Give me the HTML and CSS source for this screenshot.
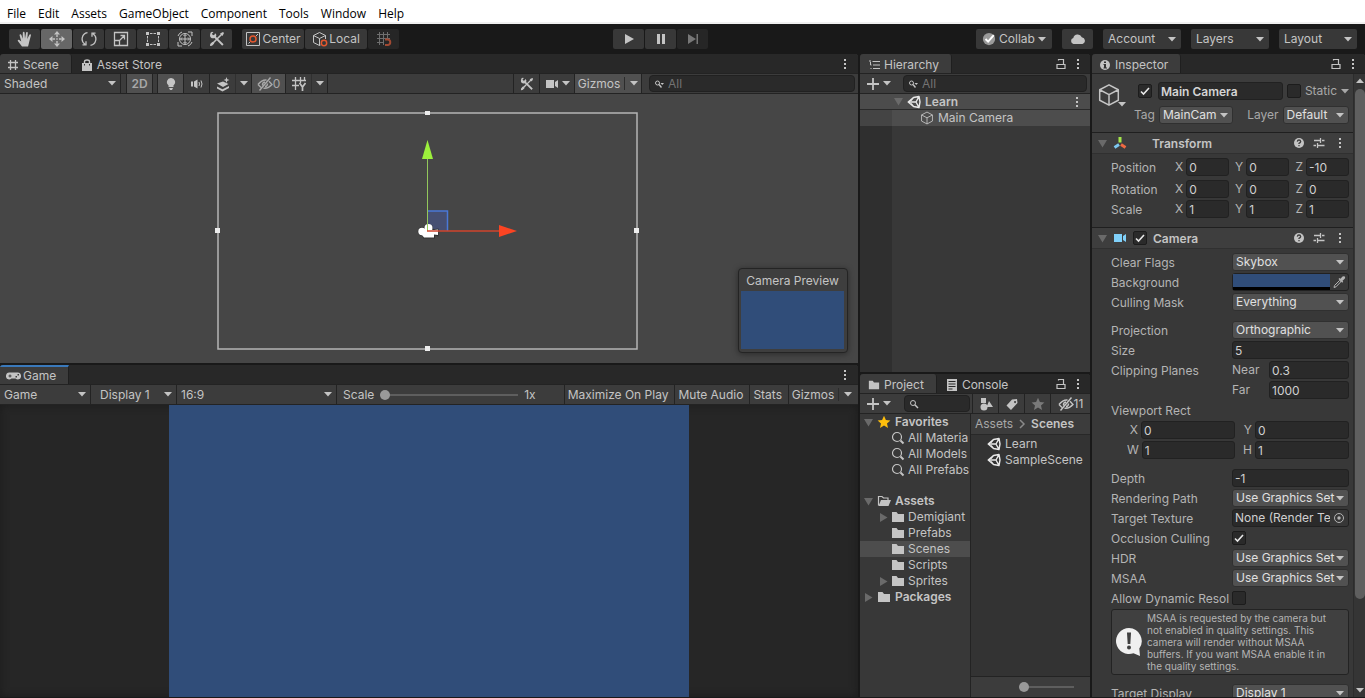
FILE: index.html
```html
<!DOCTYPE html>
<html lang="en">
<head>
    <meta charset="UTF-8">
    <meta name="viewport" content="width=device-width, initial-scale=1.0">
    <title>Learn - Scene Editor</title>
    <link rel="stylesheet" href="styles.css">
</head>
<body>
    <!-- Icon sprite -->
    <svg class="sprite" aria-hidden="true">
        <symbol id="i-hand" viewBox="0 0 16 16"><path d="M5 15.500 1 10.200C.2 9.200 1.400 8.200 2.300 9L4.300 10.600 2.600 4.400C2.400 3.200 4 2.900 4.400 4L5.700 7.800 5.800 1.700C5.900.5 7.500.5 7.600 1.700L8 7.400 9.100 1.600C9.300.5 11 .8 10.800 2L10.300 8 12.200 3.900C12.800 2.900 14.200 3.400 13.900 4.600L12.300 10.500C11.800 12.800 11.500 14.200 11 15.500Z" fill="currentColor"/></symbol>
        <symbol id="i-move" viewBox="0 0 16 16"><g fill="currentColor"><path d="M8 0 11 3.500H5ZM8 16 5 12.500H11ZM0 8 3.500 5V11ZM16 8 12.500 11V5Z"/><path d="M7.300 3.500h1.400v2.500H7.300zM7.300 10h1.400v2.500H7.300zM3.500 7.300H6v1.400H3.500zM10 7.300h2.500v1.400H10zM7.300 7.300h1.400v1.400H7.300z"/></g></symbol>
        <symbol id="i-rotate" viewBox="0 0 16 16"><g fill="none" stroke="currentColor" stroke-width="1.300"><path d="M6.500 1.700A6.300 6.300 0 0 0 4 13.200M9.500 14.300A6.300 6.300 0 0 0 12 2.800M1.500 13.800H5V10.200M14.500 2.200H11V5.800"/></g></symbol>
        <symbol id="i-scale" viewBox="0 0 16 16"><g fill="none" stroke="currentColor" stroke-width="1.300"><path d="M1.500 1.500h13v13h-13zM1.500 9.500h5v5M7 9 11.500 4.500M7.500 4.500h4v4"/></g></symbol>
        <symbol id="i-rect" viewBox="0 0 16 16"><path d="M5 2.500H11M5 13.500H11M2.500 5V11M13.500 5V11" stroke="currentColor" stroke-dasharray="2.500 1" fill="none"/><path d="M1 1h3v3H1zM12 1h3v3h-3zM1 12h3v3H1zM12 12h3v3h-3z" fill="currentColor"/></symbol>
        <symbol id="i-transform" viewBox="0 0 16 16"><g fill="none" stroke="currentColor"><circle cx="8" cy="8" r="5.500"/><path d="M8 3.500V12.500M3.500 8H12.500M6.500 5 8 3.500 9.500 5M6.500 11 8 12.500 9.500 11M5 6.500 3.500 8 5 9.500M11 6.500 12.500 8 11 9.500M1 11V15H5M11 1H15V5M1 5Q2 2 5 1M15 11Q14 14 11 15"/></g></symbol>
        <symbol id="i-tools" viewBox="0 0 16 16"><path d="M2.500 13.500 13 3" stroke="currentColor" stroke-width="1.600"/><path d="M11 2.500 14 1 15 2 13.500 5ZM4.500 1.200 2.900 2.800 4 4.300 5.500 3.800 6 2.200C7.600 3 7.600 4.700 6.900 5.700L14.600 13.200 13.200 14.800 5.500 7C3.500 8 .8 6.700 1 4.200L1.500 1.800 3 .8ZM1.200 13 3.500 10.700 5.300 12.500 3 14.800 1 15Z" fill="currentColor"/></symbol>
        <symbol id="i-center" viewBox="0 0 16 16"><path d="M1.500 1.500h13v13h-13z" fill="none" stroke="#c4c4c4"/><path d="M3.500 12.500 5.500 10.500M10.500 5.500 13 3" stroke="#c4c4c4"/><circle cx="8" cy="8" r="3" fill="none" stroke="#e4572e" stroke-width="1.500"/></symbol>
        <symbol id="i-local" viewBox="0 0 16 16"><path d="M8.500 14 7.500 14.500 1.500 11.500V4.500L7.500 1.500 13.500 4.500V8M1.500 4.500 7.500 7.500 13.500 4.500M7.500 7.500V14.500" fill="none" stroke="#c4c4c4"/><circle cx="12" cy="12" r="2.700" fill="none" stroke="#e4572e" stroke-width="1.500"/></symbol>
        <symbol id="i-snap" viewBox="0 0 16 16"><path d="M3.500 1V14M7.500 1V14M11.500 1V7M1 3.500H14M1 7.500H14M1 11.500H7" stroke="#6f6f6f" fill="none"/><path d="M9 8.500h3a2.800 2.800 0 0 1 0 5.500H9" fill="none" stroke="#a14a33" stroke-width="2"/></symbol>
        <symbol id="i-play" viewBox="0 0 16 16"><path d="M4 3 13 8 4 13Z" fill="currentColor"/></symbol>
        <symbol id="i-pause" viewBox="0 0 16 16"><path d="M4 3h3v10H4zM9 3h3v10H9z" fill="currentColor"/></symbol>
        <symbol id="i-step" viewBox="0 0 16 16"><path d="M3 3 11 8 3 13ZM11.500 3H13V13H11.500Z" fill="currentColor"/></symbol>
        <symbol id="i-down" viewBox="0 0 8 5"><path d="M0 0H8L4 4.500Z" fill="currentColor"/></symbol>
        <symbol id="i-fold" viewBox="0 0 9 9"><path d="M0 1H9L4.500 8.500Z" fill="currentColor"/></symbol>
        <symbol id="i-unfold" viewBox="0 0 9 9"><path d="M1 0V9L8.500 4.500Z" fill="currentColor"/></symbol>
        <symbol id="i-collab" viewBox="0 0 16 16"><circle cx="8" cy="8" r="7" fill="#9a9a9a"/><path d="M4 8 7 11 13.500 3.500" fill="none" stroke="#fff" stroke-width="2.300"/></symbol>
        <symbol id="i-cloud" viewBox="0 0 16 16"><path d="M3.500 13A3.100 3.100 0 0 1 3.300 7 4.500 4.500 0 0 1 11.800 6.200 3.500 3.500 0 0 1 12.500 13Z" fill="currentColor"/></symbol>
        <symbol id="i-hash" viewBox="0 0 12 12"><path d="M3.500 1V11M8.500 1V11M1 3.500H11M1 8.500H11" stroke="currentColor" stroke-width="1.300"/></symbol>
        <symbol id="i-bag" viewBox="0 0 12 12"><path d="M1 4h10v8H1z" fill="currentColor"/><path d="M3.500 5V2.500Q3.500 1 6 1T8.500 2.500V5" fill="none" stroke="currentColor" stroke-width="1.400"/><path d="M3.500 5v1.500M8.500 5v1.500" stroke="#333"/></symbol>
        <symbol id="i-dots" viewBox="0 0 4 12"><path d="M1 1h2v2H1zM1 5h2v2H1zM1 9h2v2H1z" fill="currentColor"/></symbol>
        <symbol id="i-lock" viewBox="0 0 10 12"><path d="M2.500 2.500V1.500h5V6M1 6.500h8v4H1z" fill="none" stroke="currentColor" stroke-width="1.200"/></symbol>
        <symbol id="i-bulb" viewBox="0 0 16 16"><path d="M8 2a4 4 0 0 0-2.500 7.200V11h5V9.200A4 4 0 0 0 8 2ZM6 12h4l-1 2H7Z" fill="currentColor"/></symbol>
        <symbol id="i-audio" viewBox="0 0 16 16"><path d="M2 5.500h2v5H2zM5 5.500 8.500 3.500V12.500L5 10.500Z" fill="currentColor"/><path d="M10 6Q11 8 10 10M12 4.500Q14 8 12 11.500" fill="none" stroke="currentColor"/></symbol>
        <symbol id="i-fx" viewBox="0 0 16 16"><path d="M2 7.500 8 5.500 13.500 8 8 11ZM2 10.500 7.500 13.200 14 10V12L7.500 15.500 2 12.500ZM11.500 1 12.300 3.200 14.500 4 12.300 4.800 11.500 7 10.700 4.800 8.500 4 10.700 3.200Z" fill="currentColor"/></symbol>
        <symbol id="i-eye" viewBox="0 0 16 16"><path d="M1 8.500Q5 3.500 9.500 4M12 5.200 15 8.500Q11 13 6.500 12.200M4 11.500 1 8.500M2.500 14.500 13.500 1.500M5.500 9.500Q5 6.500 8 6M10.500 7.500Q10.500 10.500 8 10.500" fill="none" stroke="currentColor" stroke-width="1.400"/></symbol>
        <symbol id="i-gridy" viewBox="0 0 16 16"><path d="M4.500 1V14M9.500 1V7M1 4.500H15M1 9.500H8M13.500 1V4" fill="none" stroke="currentColor" stroke-width="1.300"/><path d="M8.500 7 11.500 11 14.500 7M11.500 11V15" fill="none" stroke="currentColor" stroke-width="1.700"/></symbol>
        <symbol id="i-cam" viewBox="0 0 14 12"><path d="M1 2h8v8H1zM10 4 13 2V10L10 8Z" fill="currentColor"/></symbol>
        <symbol id="i-search" viewBox="0 0 12 10"><circle cx="4" cy="4" r="2.500" fill="none" stroke="currentColor"/><path d="M5.800 5.800 9 9" stroke="currentColor" stroke-width="1.500"/></symbol>
        <symbol id="i-searchmenu" viewBox="0 0 12 10"><circle cx="3.500" cy="4" r="2" fill="none" stroke="currentColor"/><path d="M5 5.500 7.500 8.500" stroke="currentColor" stroke-width="1.400"/><path d="M6.500 4h3.500L8.200 6Z" fill="currentColor"/></symbol>
        <symbol id="i-find" viewBox="0 0 14 14"><circle cx="6" cy="6" r="4.500" fill="none" stroke="currentColor" stroke-width="1.200"/><path d="M9.500 9.500 12.500 12.500" stroke="currentColor" stroke-width="2"/></symbol>
        <symbol id="i-list" viewBox="0 0 12 12"><path d="M1 2h2M4.500 2.500H12M5 6h7M5 9.500h7M2.500 3V6M2.500 6h1M2.500 9.500h1" stroke="currentColor" fill="none"/></symbol>
        <symbol id="i-plus" viewBox="0 0 12 12"><path d="M6 0V12M0 6H12" stroke="currentColor" stroke-width="1.800"/></symbol>
        <symbol id="i-unity" viewBox="0 0 14 14"><path d="M12 1.500 6.500 2.500 1.200 7 6.500 11.500 12 12.500 13 7ZM12 1.500 9 7 12 12.500M9 7H1.500M6.500 2.500 4 5.500M6.500 11.500 4 8.500" fill="none" stroke="currentColor" stroke-width="1.400" stroke-linejoin="round"/></symbol>
        <symbol id="i-cube" viewBox="0 0 16 16"><path d="M8 1.200 14.200 4.500V11.500L8 14.800 1.800 11.500V4.500ZM1.800 4.500 8 7.800 14.200 4.500M8 7.800V14.800" fill="none" stroke="currentColor" stroke-linejoin="round"/></symbol>
        <symbol id="i-info" viewBox="0 0 12 12"><circle cx="6" cy="6" r="5" fill="currentColor"/><path d="M5 2.500h2v1.500H5zM4.500 5H7v3.500H8v1H4.500v-1H5V6H4.500Z" fill="#333"/></symbol>
        <symbol id="i-axes" viewBox="0 0 14 14"><path d="M7 1V6.500" stroke="#a5e84b" stroke-width="3"/><path d="M6 8.500 1.500 11.500" stroke="#7cc8f0" stroke-width="3"/><path d="M8 8.500 12.500 11.500" stroke="#ef6a42" stroke-width="3"/></symbol>
        <symbol id="i-help" viewBox="0 0 12 12"><circle cx="6" cy="6" r="5" fill="currentColor"/><path d="M4.300 4.600Q4.500 3 6 3T7.700 4.600Q7.600 5.500 6 6.300V7M6 8V9.300" fill="none" stroke="#3e3e3e" stroke-width="1.300"/></symbol>
        <symbol id="i-preset" viewBox="0 0 12 12"><path d="M1 3.500H7M9 3.500h2.500M7.500 1V6M.500 8.500H3M5 8.500h6.500M4.500 6V11" fill="none" stroke="currentColor" stroke-width="1.300"/></symbol>
        <symbol id="i-pick" viewBox="0 0 14 14"><path d="M2 12.500 2.500 10.500 7.500 5.500 8.800 6.800 4 11.800Z" fill="none" stroke="currentColor"/><path d="M6.500 4 7.500 3 8.500 3.800 10.500 1.500Q12 .8 12.800 1.500T12.700 3.800L10.500 5.700 11.200 6.700 10.200 7.700Z" fill="currentColor"/></symbol>
        <symbol id="i-folder" viewBox="0 0 14 12"><path d="M1 1h4.500L7 3h6v8H1Z" fill="currentColor"/></symbol>
        <symbol id="i-folderopen" viewBox="0 0 14 12"><path d="M1.500 10.500V1.500H5L6.500 3H11V5" fill="none" stroke="currentColor" stroke-width="1.200"/><path d="M4 5H14L11.500 11H1.500Z" fill="currentColor"/></symbol>
        <symbol id="i-star" viewBox="0 0 14 14"><path d="M7 .8 8.900 5 13.400 5.400 10 8.500 11 13 7 10.600 3 13 4 8.500.600 5.400 5.100 5Z" fill="currentColor"/></symbol>
        <symbol id="i-console" viewBox="0 0 12 12"><path d="M1 0h10v12H1z" fill="currentColor"/><path d="M2.500 2.500h7M2.500 5h7M2.500 7.500h7M2.500 10h4" stroke="#282828"/></symbol>
        <symbol id="i-shapes" viewBox="0 0 14 14"><path d="M2 1h5v5H2zM10 4 14 10H7.500Z" fill="currentColor"/><circle cx="5" cy="10" r="3.500" fill="currentColor"/></symbol>
        <symbol id="i-tag" viewBox="0 0 14 14"><path fill-rule="evenodd" d="M7 2.500 12 2 12.500 6 6 13 1.500 8.500ZM10 4a1 1 0 1 0 .1 0Z" fill="currentColor"/></symbol>
        <symbol id="i-pad" viewBox="0 0 15 10"><path fill-rule="evenodd" d="M4 1.500H11A3.500 3.500 0 0 1 12 8.500Q10.500 8.500 9.500 7.500H5.500Q4.500 8.500 3 8.500A3.500 3.500 0 0 1 4 1.500ZM3.500 3.500V4.500H2.500v1h1v1h1v-1h1v-1h-1v-1ZM11.500 3v1.500H13V3ZM9.500 5v1.500H11V5Z" fill="currentColor"/></symbol>
        <symbol id="i-target" viewBox="0 0 12 12"><circle cx="6" cy="6" r="4.500" fill="none" stroke="currentColor"/><circle cx="6" cy="6" r="1.700" fill="currentColor"/></symbol>
        <symbol id="i-warn" viewBox="0 0 28 30"><path d="M14 1a13 13 0 1 0 4.500 25.200L25 29 24.300 21.500A13 13 0 0 0 14 1Z" fill="#f0f0f0"/><path d="M12 5.500h4L15.300 17h-2.600Z" fill="#404040"/><circle cx="14" cy="20.500" r="2" fill="#404040"/></symbol>
        <symbol id="i-chev" viewBox="0 0 8 12"><path d="M2 2 6 6 2 10" fill="none" stroke="#8a8a8a" stroke-width="1.500"/></symbol>
    </svg>

    <div class="editor">
        <nav class="menubar">
            <a href="#">File</a>
            <a href="#">Edit</a>
            <a href="#">Assets</a>
            <a href="#">GameObject</a>
            <a href="#">Component</a>
            <a href="#">Tools</a>
            <a href="#">Window</a>
            <a href="#">Help</a>
        </nav>

        <header class="toolbar">
            <div class="button-group">
                <button class="tool" aria-label="Hand"><svg class="icon"><use href="#i-hand"/></svg></button>
                <button class="tool active" aria-label="Move"><svg class="icon"><use href="#i-move"/></svg></button>
                <button class="tool" aria-label="Rotate"><svg class="icon"><use href="#i-rotate"/></svg></button>
                <button class="tool" aria-label="Scale"><svg class="icon"><use href="#i-scale"/></svg></button>
                <button class="tool" aria-label="Rect"><svg class="icon"><use href="#i-rect"/></svg></button>
                <button class="tool" aria-label="Transform"><svg class="icon"><use href="#i-transform"/></svg></button>
                <button class="tool" aria-label="Custom tools"><svg class="icon"><use href="#i-tools"/></svg></button>
            </div>
            <div class="button-group">
                <button class="tool wide"><svg class="icon"><use href="#i-center"/></svg>Center</button>
                <button class="tool wide"><svg class="icon"><use href="#i-local"/></svg>Local</button>
                <button class="tool dim" aria-label="Grid snapping"><svg class="icon"><use href="#i-snap"/></svg></button>
            </div>
            <div class="button-group play-group">
                <button class="tool" aria-label="Play"><svg class="icon"><use href="#i-play"/></svg></button>
                <button class="tool" aria-label="Pause"><svg class="icon"><use href="#i-pause"/></svg></button>
                <button class="tool dim" aria-label="Step"><svg class="icon"><use href="#i-step"/></svg></button>
            </div>
            <div class="toolbar-right">
                <button class="tool collab"><svg class="icon-row"><use href="#i-collab"/></svg>Collab<svg class="arrow"><use href="#i-down"/></svg></button>
                <button class="tool" aria-label="Cloud"><svg class="icon"><use href="#i-cloud"/></svg></button>
                <button class="tool menu">Account<svg class="arrow"><use href="#i-down"/></svg></button>
                <button class="tool menu">Layers<svg class="arrow"><use href="#i-down"/></svg></button>
                <button class="tool menu">Layout<svg class="arrow"><use href="#i-down"/></svg></button>
            </div>
        </header>

        <main class="workspace">
            <div class="column column-left">
                <!-- Scene -->
                <section class="panel scene">
                    <div class="tabs">
                        <button class="tab active"><svg class="icon-small"><use href="#i-hash"/></svg>Scene</button>
                        <button class="tab"><svg class="icon-small"><use href="#i-bag"/></svg>Asset Store</button>
                        <button class="dots" aria-label="Scene options"><svg><use href="#i-dots"/></svg></button>
                    </div>
                    <div class="strip">
                        <select class="strip-select shading" aria-label="Shading mode"><option>Shaded</option></select>
                        <button class="cell on two-d">2D</button>
                        <button class="cell on first" aria-label="Lighting"><svg class="icon"><use href="#i-bulb"/></svg></button>
                        <button class="cell" aria-label="Audio"><svg class="icon"><use href="#i-audio"/></svg></button>
                        <button class="cell" aria-label="Effects"><svg class="icon"><use href="#i-fx"/></svg></button>
                        <button class="cell slim" aria-label="Effects options"><svg class="arrow"><use href="#i-down"/></svg></button>
                        <button class="cell on eye"><svg class="icon"><use href="#i-eye"/></svg>0</button>
                        <button class="cell" aria-label="Grid"><svg class="icon"><use href="#i-gridy"/></svg></button>
                        <button class="cell slim last" aria-label="Grid options"><svg class="arrow"><use href="#i-down"/></svg></button>
                        <button class="cell push" aria-label="Component tools"><svg class="icon-row"><use href="#i-tools"/></svg></button>
                        <button class="cell cam" aria-label="Scene camera"><svg class="icon-row"><use href="#i-cam"/></svg><svg class="arrow"><use href="#i-down"/></svg></button>
                        <button class="cell on gizmos">Gizmos<svg class="arrow"><use href="#i-down"/></svg></button>
                        <label class="search scene-search"><svg><use href="#i-searchmenu"/></svg><input type="text" placeholder="All" aria-label="Search scene"></label>
                    </div>
                    <div class="scene-view">
                        <svg class="scene-canvas" viewBox="0 0 858 269">
                            <rect x="218" y="19" width="419" height="236" fill="none" stroke="#b5b5b5" stroke-width="1.500"/>
                            <g fill="#ececec">
                                <rect x="425" y="17" width="5" height="4"/>
                                <rect x="425" y="252" width="5" height="5"/>
                                <rect x="215" y="134" width="5" height="5"/>
                                <rect x="634" y="134" width="5" height="5"/>
                            </g>
                            <path d="M427 117h21v20h-21z" fill="#464f72"/>
                            <path d="M427 117h20.500v20" fill="none" stroke="#4a78d8" stroke-width="1.500"/>
                            <g fill="#303030">
                                <circle cx="422" cy="137.500" r="4.300"/>
                                <circle cx="428.500" cy="134.500" r="4.600"/>
                                <path d="M422 135H435L438.500 134.500V142.500L435 141.500V144.500H423Z"/>
                            </g>
                            <g fill="#fff">
                                <circle cx="422" cy="137.500" r="3.700"/>
                                <circle cx="428.500" cy="134" r="4"/>
                                <path d="M422 136H434L438 135.500V141L434 140.500V143.500H424L422 141Z"/>
                            </g>
                            <path d="M427.500 137V65" stroke="#93c75c"/>
                            <path d="M427.500 46 433 65H422Z" fill="#9cf03c"/>
                            <path d="M427 137H500" stroke="#d0442c" stroke-width="1.500"/>
                            <path d="M499 131 517 137 499 143Z" fill="#fb4422"/>
                        </svg>
                        <div class="preview">
                            <span>Camera Preview</span>
                            <div class="preview-image"></div>
                        </div>
                    </div>
                </section>

                <!-- Game -->
                <section class="panel game">
                    <div class="tabs">
                        <button class="tab active focused"><svg class="icon-pad"><use href="#i-pad"/></svg>Game</button>
                        <button class="dots" aria-label="Game options"><svg><use href="#i-dots"/></svg></button>
                    </div>
                    <div class="strip">
                        <select class="strip-select game-mode" aria-label="View"><option>Game</option></select>
                        <select class="strip-select display" aria-label="Display"><option>Display 1</option></select>
                        <select class="strip-select aspect" aria-label="Aspect"><option>16:9</option></select>
                        <label class="scale">Scale <input type="range" min="1" max="5" value="1"> 1x</label>
                        <button class="cell">Maximize On Play</button>
                        <button class="cell">Mute Audio</button>
                        <button class="cell">Stats</button>
                        <button class="cell gizmos">Gizmos<svg class="arrow"><use href="#i-down"/></svg></button>
                    </div>
                    <div class="game-view"><div class="game-image"></div></div>
                </section>
            </div>

            <div class="column column-mid">
                <!-- Hierarchy -->
                <section class="panel hierarchy">
                    <div class="tabs">
                        <button class="tab active"><svg class="icon-small"><use href="#i-list"/></svg>Hierarchy</button>
                        <button class="lock" aria-label="Lock hierarchy"><svg><use href="#i-lock"/></svg></button>
                        <button class="dots" aria-label="Hierarchy options"><svg><use href="#i-dots"/></svg></button>
                    </div>
                    <div class="strip">
                        <button class="add" aria-label="Create object"><svg class="icon-small"><use href="#i-plus"/></svg><svg class="arrow"><use href="#i-down"/></svg></button>
                        <label class="search"><svg><use href="#i-searchmenu"/></svg><input type="text" placeholder="All" aria-label="Search hierarchy"></label>
                    </div>
                    <ul class="hierarchy-list">
                        <li class="scene-row"><svg class="fold"><use href="#i-fold"/></svg><svg class="icon-row bright"><use href="#i-unity"/></svg><b>Learn</b><button class="dots" aria-label="Learn options"><svg><use href="#i-dots"/></svg></button></li>
                        <li class="object-row"><svg class="icon-row"><use href="#i-cube"/></svg>Main Camera</li>
                    </ul>
                </section>

                <!-- Project -->
                <section class="panel project">
                    <div class="tabs">
                        <button class="tab active"><svg class="icon-small"><use href="#i-folder"/></svg>Project</button>
                        <button class="tab"><svg class="icon-small"><use href="#i-console"/></svg>Console</button>
                        <button class="lock" aria-label="Lock project"><svg><use href="#i-lock"/></svg></button>
                        <button class="dots" aria-label="Project options"><svg><use href="#i-dots"/></svg></button>
                    </div>
                    <div class="strip">
                        <button class="add" aria-label="Create asset"><svg class="icon-small"><use href="#i-plus"/></svg><svg class="arrow"><use href="#i-down"/></svg></button>
                        <label class="search"><svg><use href="#i-search"/></svg><input type="text" aria-label="Search project"></label>
                        <button class="cell" aria-label="Filter by type"><svg class="icon-row"><use href="#i-shapes"/></svg></button>
                        <button class="cell" aria-label="Filter by label"><svg class="icon-row"><use href="#i-tag"/></svg></button>
                        <button class="cell faded" aria-label="Save search"><svg class="icon-row"><use href="#i-star"/></svg></button>
                        <button class="cell hidden-count"><svg class="icon"><use href="#i-eye"/></svg>11</button>
                    </div>
                    <div class="project-body">
                        <ul class="tree">
                            <li><svg class="fold"><use href="#i-fold"/></svg><svg class="icon-row gold"><use href="#i-star"/></svg><b>Favorites</b></li>
                            <li class="child"><svg class="icon-row"><use href="#i-find"/></svg>All Materia</li>
                            <li class="child"><svg class="icon-row"><use href="#i-find"/></svg>All Models</li>
                            <li class="child"><svg class="icon-row"><use href="#i-find"/></svg>All Prefabs</li>
                            <li class="group"><svg class="fold"><use href="#i-fold"/></svg><svg class="icon-row"><use href="#i-folderopen"/></svg><b>Assets</b></li>
                            <li class="child"><svg class="fold"><use href="#i-unfold"/></svg><svg class="icon-row"><use href="#i-folder"/></svg>Demigiant</li>
                            <li class="child"><svg class="icon-row"><use href="#i-folder"/></svg>Prefabs</li>
                            <li class="child selected"><svg class="icon-row"><use href="#i-folder"/></svg>Scenes</li>
                            <li class="child"><svg class="icon-row"><use href="#i-folder"/></svg>Scripts</li>
                            <li class="child"><svg class="fold"><use href="#i-unfold"/></svg><svg class="icon-row"><use href="#i-folder"/></svg>Sprites</li>
                            <li><svg class="fold"><use href="#i-unfold"/></svg><svg class="icon-row"><use href="#i-folder"/></svg><b>Packages</b></li>
                        </ul>
                        <div class="files">
                            <div class="breadcrumbs"><a href="#">Assets</a><svg class="chevron"><use href="#i-chev"/></svg><b>Scenes</b></div>
                            <ul class="file-list">
                                <li><svg class="icon-row bright"><use href="#i-unity"/></svg>Learn</li>
                                <li><svg class="icon-row bright"><use href="#i-unity"/></svg>SampleScene</li>
                            </ul>
                            <div class="zoom-bar"><input type="range" min="0" max="100" value="0" aria-label="Icon size"></div>
                        </div>
                    </div>
                </section>
            </div>

            <!-- Inspector -->
            <section class="panel inspector">
                <div class="tabs">
                    <button class="tab active"><svg class="icon-small"><use href="#i-info"/></svg>Inspector</button>
                    <button class="lock" aria-label="Lock inspector"><svg><use href="#i-lock"/></svg></button>
                    <button class="dots" aria-label="Inspector options"><svg><use href="#i-dots"/></svg></button>
                </div>
                <div class="inspector-body">
                    <div class="inspector-content">
                        <div class="object-header">
                            <button class="object-icon" aria-label="Object icon"><svg class="icon-big"><use href="#i-cube"/></svg><svg class="arrow"><use href="#i-down"/></svg></button>
                            <div class="object-fields">
                                <div class="object-line">
                                    <input type="checkbox" checked aria-label="Active">
                                    <input type="text" class="object-name" value="Main Camera" aria-label="Name">
                                    <label class="static"><input type="checkbox">Static<svg class="arrow"><use href="#i-down"/></svg></label>
                                </div>
                                <div class="object-line tag-line">
                                    <label for="tag">Tag</label>
                                    <select id="tag" class="tag-select"><option>MainCam</option></select>
                                    <label for="layer" class="layer-label">Layer</label>
                                    <select id="layer" class="layer-select"><option>Default</option></select>
                                </div>
                            </div>
                        </div>

                        <div class="component-header">
                            <svg class="fold"><use href="#i-fold"/></svg>
                            <svg class="icon-row"><use href="#i-axes"/></svg>
                            <b class="no-toggle">Transform</b>
                            <button class="head-button" aria-label="Transform help"><svg><use href="#i-help"/></svg></button>
                            <button class="head-button" aria-label="Transform presets"><svg><use href="#i-preset"/></svg></button>
                            <button class="dots" aria-label="Transform options"><svg><use href="#i-dots"/></svg></button>
                        </div>
                        <div class="component transform">
                            <div class="vector position">
                                <span>Position</span>
                                <label>X<input type="text" value="0"></label>
                                <label>Y<input type="text" value="0"></label>
                                <label>Z<input type="text" value="-10"></label>
                            </div>
                            <div class="vector">
                                <span>Rotation</span>
                                <label>X<input type="text" value="0"></label>
                                <label>Y<input type="text" value="0"></label>
                                <label>Z<input type="text" value="0"></label>
                            </div>
                            <div class="vector">
                                <span>Scale</span>
                                <label>X<input type="text" value="1"></label>
                                <label>Y<input type="text" value="1"></label>
                                <label>Z<input type="text" value="1"></label>
                            </div>
                        </div>

                        <div class="component-header">
                            <svg class="fold"><use href="#i-fold"/></svg>
                            <svg class="icon-row blue"><use href="#i-cam"/></svg>
                            <input type="checkbox" checked aria-label="Camera enabled">
                            <b>Camera</b>
                            <button class="head-button" aria-label="Camera help"><svg><use href="#i-help"/></svg></button>
                            <button class="head-button" aria-label="Camera presets"><svg><use href="#i-preset"/></svg></button>
                            <button class="dots" aria-label="Camera options"><svg><use href="#i-dots"/></svg></button>
                        </div>
                        <div class="component">
                            <div class="field">
                                <label for="clear-flags">Clear Flags</label>
                                <select id="clear-flags"><option>Skybox</option></select>
                            </div>
                            <div class="field">
                                <span>Background</span>
                                <div class="color-field">
                                    <button class="swatch" aria-label="Background color"></button>
                                    <button class="picker" aria-label="Pick color"><svg><use href="#i-pick"/></svg></button>
                                </div>
                            </div>
                            <div class="field">
                                <label for="culling-mask">Culling Mask</label>
                                <select id="culling-mask"><option>Everything</option></select>
                            </div>
                            <div class="field spaced">
                                <label for="projection">Projection</label>
                                <select id="projection"><option>Orthographic</option></select>
                            </div>
                            <div class="field">
                                <label for="size">Size</label>
                                <input type="text" id="size" value="5">
                            </div>
                            <div class="field">
                                <span>Clipping Planes</span>
                                <label class="plane">Near<input type="text" value="0.3"></label>
                            </div>
                            <div class="field">
                                <span></span>
                                <label class="plane">Far<input type="text" value="1000"></label>
                            </div>
                            <div class="field"><span>Viewport Rect</span></div>
                            <div class="rect">
                                <label>X<input type="text" value="0"></label>
                                <label>Y<input type="text" value="0"></label>
                            </div>
                            <div class="rect">
                                <label>W<input type="text" value="1"></label>
                                <label>H<input type="text" value="1"></label>
                            </div>
                            <div class="field spaced">
                                <label for="depth">Depth</label>
                                <input type="text" id="depth" value="-1">
                            </div>
                            <div class="field">
                                <label for="rendering-path">Rendering Path</label>
                                <select id="rendering-path"><option>Use Graphics Set</option></select>
                            </div>
                            <div class="field">
                                <label for="target-texture">Target Texture</label>
                                <div class="object-field">
                                    <input type="text" id="target-texture" value="None (Render Te">
                                    <button aria-label="Select texture"><svg><use href="#i-target"/></svg></button>
                                </div>
                            </div>
                            <div class="field">
                                <label for="occlusion">Occlusion Culling</label>
                                <input type="checkbox" id="occlusion" checked>
                            </div>
                            <div class="field">
                                <label for="hdr">HDR</label>
                                <select id="hdr"><option>Use Graphics Set</option></select>
                            </div>
                            <div class="field">
                                <label for="msaa">MSAA</label>
                                <select id="msaa"><option>Use Graphics Set</option></select>
                            </div>
                            <div class="field">
                                <label for="dynamic">Allow Dynamic Resol</label>
                                <input type="checkbox" id="dynamic">
                            </div>
                            <div class="help-box">
                                <svg><use href="#i-warn"/></svg>
                                <p>MSAA is requested by the camera but not enabled in quality settings. This camera will render without MSAA buffers. If you want MSAA enable it in the quality settings.</p>
                            </div>
                            <div class="field spaced">
                                <label for="target-display">Target Display</label>
                                <select id="target-display"><option>Display 1</option></select>
                            </div>
                        </div>
                    </div>
                    <div class="scrollbar">
                        <svg class="arrow up"><use href="#i-down"/></svg>
                        <div class="track"><div class="thumb"></div></div>
                        <svg class="arrow"><use href="#i-down"/></svg>
                    </div>
                </div>
            </section>
        </main>
    </div>
</body>
</html>
```
FILE: styles.css
```css
* {
    margin: 0;
    padding: 0;
    box-sizing: border-box;
}

body {
    font-family: Inter, "Liberation Sans", sans-serif;
    font-size: 12px;
    line-height: 16px;
    color: #c4c4c4;
    background: #191919;
    overflow: hidden;
}

button, input, select {
    font: inherit;
    color: inherit;
    border: none;
    background: none;
    outline: none;
    min-width: 0;
}

a {
    color: inherit;
    text-decoration: none;
}

ul {
    list-style: none;
}

svg {
    flex: none;
    display: block;
}

b {
    font-weight: 600;
}

.sprite {
    display: none;
}

.icon {
    width: 16px;
    height: 16px;
}

.icon-small {
    width: 12px;
    height: 12px;
}

.icon-row {
    width: 14px;
    height: 14px;
}

.icon-pad {
    width: 15px;
    height: 10px;
}

.arrow {
    width: 8px;
    height: 5px;
}

.fold {
    width: 9px;
    height: 9px;
    color: #6a6a6a;
}

.bright {
    color: #e8e8e8;
}

.editor {
    display: flex;
    flex-direction: column;
    height: 100vh;
}

/* Menu bar */
.menubar {
    display: flex;
    gap: 12px;
    padding: 6px 7px 0;
    background: #fff;
    border-bottom: 2px solid #f0f0f0;
    color: #000;
    font-family: "Open Sans", "Noto Sans", sans-serif;
}

/* Main toolbar */
.toolbar {
    display: flex;
    align-items: center;
    gap: 10px;
    height: 30px;
    flex: none;
    padding: 0 8px 0 9px;
}

.button-group {
    display: flex;
    gap: 1px;
}

.play-group {
    margin-left: 204px;
}

.toolbar-right {
    display: flex;
    gap: 10px;
    margin-left: auto;
}

.tool {
    display: flex;
    align-items: center;
    justify-content: center;
    width: 31px;
    height: 20px;
    background: #383838;
    border-radius: 2px;
}

.tool.active {
    background: #676767;
}

.tool.dim {
    background: #262626;
    color: #777;
}

.tool.wide {
    width: 62px;
    gap: 1px;
}

.tool.collab {
    width: 76px;
    gap: 3px;
}

.tool.menu {
    width: 78px;
    padding: 0 5px;
    justify-content: space-between;
}

/* Panels */
.workspace {
    flex: 1;
    min-height: 0;
    display: grid;
    grid-template-columns: 858fr 230fr 273fr;
    gap: 2px;
    padding-bottom: 1px;
}

.column {
    display: grid;
    gap: 2px;
    min-width: 0;
    min-height: 0;
}

.column-left {
    grid-template-rows: 309fr 332fr;
}

.column-mid {
    grid-template-rows: 318fr 323fr;
}

.panel {
    display: flex;
    flex-direction: column;
    min-width: 0;
    min-height: 0;
    overflow: hidden;
    background: #383838;
    border-radius: 3px 3px 0 0;
}

.tabs {
    display: flex;
    height: 19px;
    flex: none;
    background: #282828;
}

.tab {
    display: flex;
    align-items: center;
    gap: 4px;
    padding: 2px 12px 0 7px;
}

.tab.active {
    background: #3c3c3c;
    border-right: 1px solid #1f1f1f;
    border-radius: 3px 3px 0 0;
}

.column-mid .tab {
    padding-left: 8px;
}

.tab.focused {
    gap: 2px;
    padding: 1px 12px 0 6px;
    border-top: 2px solid #3a79bb;
    border-radius: 0;
}

.tab + .tab {
    padding-left: 9px;
}

.dots {
    margin-left: auto;
    width: 26px;
    display: flex;
    align-items: center;
    justify-content: center;
}

.dots svg {
    width: 4px;
    height: 12px;
}

.lock {
    margin-left: auto;
    display: flex;
    align-items: center;
}

.lock svg {
    width: 10px;
    height: 12px;
}

.lock + .dots {
    margin-left: 0;
    width: 24px;
}

.strip {
    display: flex;
    height: 21px;
    flex: none;
    background: #3c3c3c;
    border-top: 1px solid #232323;
    border-bottom: 1px solid #232323;
}

.cell {
    display: flex;
    align-items: center;
    justify-content: center;
    min-width: 26px;
    border-left: 1px solid #232323;
    white-space: nowrap;
}

.cell.on {
    background: #505050;
}

.cell.slim {
    min-width: 16px;
    border-left-color: #303030;
}

.cell.first {
    margin-left: 4px;
}

.cell.last {
    width: 17px;
    border-right: 1px solid #232323;
}

.cell.push {
    margin-left: auto;
}

.two-d {
    margin-left: 5px;
    border-right: 1px solid #232323;
    width: 27px;
    font-weight: 600;
    color: #a8a8a8;
}

.cell.eye {
    width: 34px;
    color: #a8a8a8;
}

.cell.cam {
    width: 35px;
    gap: 3px;
}

.cell.gizmos {
    width: 68px;
    gap: 4px;
    padding: 0 3px;
}

.gizmos .arrow {
    width: 14px;
    height: 13px;
    padding: 4px 0 4px 5px;
    border-left: 1px solid #2c2c2c;
}

.scene .cell.gizmos {
    border-right: 1px solid #232323;
}

.game .cell {
    padding: 0 6px 0 3px;
}

.game .cell.gizmos {
    width: 70px;
}

.strip-select {
    appearance: none;
    padding: 0 16px 0 4px;
    border-right: 1px solid #232323;
    background: url("data:image/svg+xml,%3Csvg xmlns='http://www.w3.org/2000/svg' width='8' height='5'%3E%3Cpath d='M0 0H8L4 4.5Z' fill='%23c4c4c4'/%3E%3C/svg%3E") no-repeat right 4px center;
}

.shading {
    width: 121px;
}

.game-mode {
    width: 91px;
}

.display {
    width: 86px;
    padding-left: 9px;
}

.aspect {
    width: 160px;
}

.scale {
    flex: 1;
    display: flex;
    align-items: center;
    gap: 6px;
    padding: 0 28px 0 6px;
}

input[type="range"] {
    appearance: none;
    flex: 1;
    height: 10px;
    background: linear-gradient(#5e5e5e, #5e5e5e) no-repeat center / 100% 2px;
}

input[type="range"]::-webkit-slider-thumb {
    appearance: none;
    width: 10px;
    height: 10px;
    border-radius: 50%;
    background: #999;
}

.search {
    flex: 1;
    min-width: 0;
    display: flex;
    align-items: center;
    gap: 2px;
    height: 17px;
    margin: 1px 3px 0 12px;
    padding: 0 4px;
    background: #2a2a2a;
    border: 1px solid #212121;
    border-radius: 4px;
}

.search svg {
    width: 12px;
    height: 10px;
}

.search input {
    flex: 1;
    width: 0;
}

.search input::placeholder {
    color: #737373;
}

.scene-search {
    flex: 0 0 24%;
    margin-left: 7px;
}

.add {
    display: flex;
    align-items: center;
    gap: 4px;
    padding-left: 7px;
}

/* Scene view */
.scene-view {
    position: relative;
    flex: 1;
    min-height: 0;
    background: #464646;
}

.scene-canvas {
    width: 100%;
    height: 100%;
}

.preview {
    position: absolute;
    right: 10px;
    bottom: 10px;
    width: 110px;
    padding: 4px 3px 3px 2px;
    background: #3e3e3e;
    border: 1px solid #242424;
    border-radius: 4px;
    box-shadow: 0 1px 6px rgba(0, 0, 0, 0.4);
    text-align: center;
}

.preview-image {
    height: 58px;
    margin-top: 2px;
    background: #304d79;
}

/* Game view */
.game-view {
    flex: 1;
    min-height: 0;
    display: flex;
    justify-content: center;
    background: #262626;
    box-shadow: inset 0 0 8px #1c1c1c;
}

.game-image {
    height: 100%;
    aspect-ratio: 16 / 9;
    background: #304d79;
}

/* Hierarchy */
.hierarchy-list {
    flex: 1;
    background: linear-gradient(90deg, #2f2f2f 32px, #383838 32px);
}

.hierarchy-list li {
    display: flex;
    align-items: center;
    height: 16px;
    gap: 4px;
}

.scene-row {
    padding-left: 34px;
    background: #4c4c4c;
    border-bottom: 1px solid #2a2a2a;
}

.object-row {
    padding-left: 60px;
    background: linear-gradient(90deg, #444 32px, #4d4d4d 32px);
}

/* Project */
.project-body {
    flex: 1;
    min-height: 0;
    display: grid;
    grid-template-columns: 110fr 120fr;
}

.tree {
    overflow: hidden;
}

.tree li {
    display: flex;
    align-items: center;
    gap: 4px;
    height: 16px;
    padding-left: 4px;
    white-space: nowrap;
}

.tree li.child {
    gap: 3px;
    padding-left: 31px;
}

.tree li.child:has(.fold) {
    padding-left: 19px;
}

.tree li.group {
    margin-top: 15px;
}

.tree li.selected {
    background: #4d4d4d;
}

.gold {
    color: #fdbe0c;
}

.faded {
    color: #7a7a7a;
}

.project .search {
    flex: 0 0 66px;
    margin-left: 14px;
    margin-right: 2px;
}

.project .cell {
    flex: 1 1 26px;
}

.project .hidden-count {
    flex: 0 0 40px;
}

.files {
    display: flex;
    flex-direction: column;
    min-width: 0;
    border-left: 1px solid #232323;
    background: #333;
}

.breadcrumbs {
    display: flex;
    align-items: center;
    gap: 5px;
    height: 21px;
    padding-left: 4px;
    background: #3c3c3c;
    border-bottom: 1px solid #282828;
}

.breadcrumbs a {
    color: #a8a8a8;
}

.chevron {
    width: 8px;
    height: 12px;
}

.file-list {
    flex: 1;
    padding-top: 1px;
}

.file-list li {
    display: flex;
    align-items: center;
    gap: 4px;
    height: 16px;
    padding-left: 16px;
}

.zoom-bar {
    display: flex;
    align-items: center;
    height: 21px;
    padding: 0 16px 0 48px;
    background: #3c3c3c;
    border-top: 1px solid #232323;
}

/* Inspector */
.inspector-body {
    flex: 1;
    min-height: 0;
    display: flex;
    border-top: 1px solid #232323;
}

.inspector-content {
    flex: 1;
    min-width: 0;
    overflow: hidden;
}

.inspector select,
.inspector input[type="text"],
.color-field,
.object-field {
    height: 18px;
    border: 1px solid #212121;
    border-radius: 3px;
}

.inspector input[type="text"],
.object-field {
    padding-left: 2px;
    background: #2a2a2a;
}

.inspector select {
    appearance: none;
    padding: 0 12px 0 3px;
    border-color: #303030;
    color: #e0e0e0;
    background: #515151 url("data:image/svg+xml,%3Csvg xmlns='http://www.w3.org/2000/svg' width='8' height='5'%3E%3Cpath d='M0 0H8L4 4.5Z' fill='%23c4c4c4'/%3E%3C/svg%3E") no-repeat right 4px center;
}

.inspector input[type="checkbox"] {
    appearance: none;
    flex: none;
    width: 14px;
    height: 14px;
    background: #2a2a2a;
    border: 1px solid #1c1c1c;
    border-radius: 2px;
}

.inspector input[type="checkbox"]:checked {
    background: #2a2a2a url("data:image/svg+xml,%3Csvg xmlns='http://www.w3.org/2000/svg' width='12' height='12'%3E%3Cpath d='M2 6.5 4.5 9 10 3' fill='none' stroke='%23e8e8e8' stroke-width='1.6'/%3E%3C/svg%3E") no-repeat center;
}

.object-header {
    display: flex;
    height: 58px;
    padding: 7px 4px 0 5px;
    background: #3c3c3c;
}

.object-icon {
    display: flex;
    align-items: flex-end;
    align-self: flex-start;
    height: 26px;
    width: 37px;
}

.object-icon .arrow {
    margin-left: -3px;
}

.icon-big {
    width: 24px;
    height: 24px;
}

.object-fields {
    flex: 1;
    min-width: 0;
}

.object-line {
    display: flex;
    align-items: center;
    height: 20px;
    padding-left: 4px;
}

.inspector .object-name {
    flex: 1;
    margin: 0 4px 0 6px;
    font-weight: 600;
    color: #d4d4d4;
}

.static {
    display: flex;
    align-items: center;
    gap: 4px;
    color: #a8a8a8;
}

.tag-line {
    margin-top: 4px;
    padding-left: 0;
    gap: 4px;
    color: #a8a8a8;
}

.tag-select {
    flex: 73;
}

.layer-select {
    flex: 63;
}

.layer-label {
    margin-left: 10px;
}

.component-header {
    display: flex;
    align-items: center;
    height: 22px;
    padding-left: 6px;
    gap: 6px;
    background: #3e3e3e;
    border-top: 1px solid #1f1f1f;
    border-bottom: 1px solid #303030;
}

.component-header b {
    flex: 1;
    padding-top: 1px;
}

.component-header .no-toggle {
    padding-left: 19px;
}

.component-header .dots {
    margin-left: -6px;
}

.head-button {
    margin-right: 2px;
}

.head-button svg {
    width: 12px;
    height: 12px;
}

.blue {
    color: #80d1fa;
}

.component {
    padding: 3px 4px 0 19px;
    color: #b4b4b4;
}

.transform {
    padding-bottom: 8px;
}

.component input {
    color: #d0d0d0;
}

.vector {
    display: grid;
    grid-template-columns: 58px 1fr 1fr 1fr;
    gap: 6px;
    align-items: center;
    height: 20px;
}

.vector.position {
    margin-bottom: 2px;
}

.vector label,
.rect label {
    display: flex;
    align-items: center;
    justify-content: flex-end;
    gap: 3px;
}

.vector input {
    width: calc(100% - 11px);
}

.rect input {
    width: calc(100% - 14px);
}

.field {
    display: grid;
    grid-template-columns: 121px 1fr;
    align-items: center;
    height: 20px;
    white-space: nowrap;
}

.field > label:first-child,
.field > span,
.vector > span {
    padding-top: 2px;
}

.field.spaced {
    margin-top: 8px;
}

.color-field {
    display: flex;
}

.swatch {
    flex: 1;
    background: #304d79;
    border-bottom: 3px solid #000;
}

.picker {
    padding: 0 2px;
}

.picker svg {
    width: 14px;
    height: 14px;
}

.plane {
    display: flex;
    align-items: center;
    justify-content: space-between;
}

.plane input {
    width: 80px;
}

.rect {
    display: grid;
    grid-template-columns: 1fr 1fr;
    gap: 6px;
    height: 20px;
    padding-left: 16px;
}

.object-field {
    display: flex;
    overflow: hidden;
}

.inspector .object-field input {
    flex: 1;
    height: 16px;
    padding: 0;
    border: none;
}

.object-field button {
    padding: 0 3px;
    background: #373737;
}

.object-field button svg {
    width: 12px;
    height: 12px;
}

.help-box {
    display: flex;
    align-items: center;
    gap: 4px;
    margin-top: 1px;
    padding: 2px 10px 2px 3px;
    background: #404040;
    border: 1px solid #232323;
    border-radius: 3px;
    font-size: 10px;
    line-height: 12px;
}

.help-box svg {
    width: 28px;
    height: 30px;
}

.scrollbar {
    width: 12px;
    display: flex;
    flex-direction: column;
    align-items: center;
    padding: 4px 0;
    background: #353535;
    border-left: 1px solid #2c2c2c;
}

.scrollbar .up {
    transform: rotate(180deg);
}

.track {
    flex: 1;
    align-self: stretch;
    margin: 6px 0;
}

.thumb {
    height: 86%;
    margin-left: 1px;
    background: #5f5f5f;
    border-radius: 5px;
}
```
